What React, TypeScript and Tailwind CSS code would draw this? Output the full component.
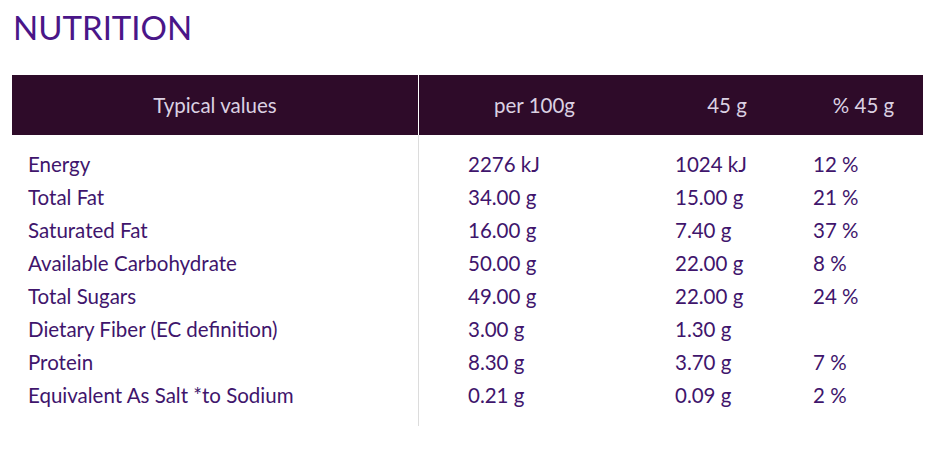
const rows = [
  ["Energy", "2276 kJ", "1024 kJ", "12 %"],
  ["Total Fat", "34.00 g", "15.00 g", "21 %"],
  ["Saturated Fat", "16.00 g", "7.40 g", "37 %"],
  ["Available Carbohydrate", "50.00 g", "22.00 g", "8 %"],
  ["Total Sugars", "49.00 g", "22.00 g", "24 %"],
  ["Dietary Fiber (EC definition)", "3.00 g", "1.30 g", ""],
  ["Protein", "8.30 g", "3.70 g", "7 %"],
  ["Equivalent As Salt *to Sodium", "0.21 g", "0.09 g", "2 %"],
];

export default function App() {
  return (
    <div className="min-h-[453px] w-[943px] bg-white px-3 pt-[7px] font-['Lato',sans-serif]">
      <h1 className="pl-px text-[33px] leading-[40px] text-[#4a1688]">NUTRITION</h1>

      <div className="mt-7 w-[911px]">
        <div className="grid h-[60px] grid-cols-[406px_1px_231px_154px_119px] bg-[#2e0b29] text-[20.5px] text-[#dbd1e2]">
          <div className="flex items-center justify-center">Typical values</div>
          <div className="bg-white" />
          <div className="flex items-center justify-center">per 100g</div>
          <div className="flex items-center justify-center">45 g</div>
          <div className="flex items-center justify-center">% 45 g</div>
        </div>

        <div className="grid grid-cols-[406px_1px_504px] text-[20.5px] text-[#40156c]">
          <div className="pb-[14px] pl-4 pt-[13px]">
            {rows.map((r) => (
              <div key={r[0]} className="h-[33px] leading-[33px]">
                {r[0]}
              </div>
            ))}
          </div>
          <div className="bg-[#dcdcdc]" />
          <div className="pb-[14px] pt-[13px]">
            {rows.map((r) => (
              <div key={r[0]} className="grid h-[33px] grid-cols-[231px_154px_119px] leading-[33px]">
                <div className="pl-[49px]">{r[1]}</div>
                <div className="pl-[25px]">{r[2]}</div>
                <div className="pl-[9px]">{r[3]}</div>
              </div>
            ))}
          </div>
        </div>
      </div>
    </div>
  );
}
